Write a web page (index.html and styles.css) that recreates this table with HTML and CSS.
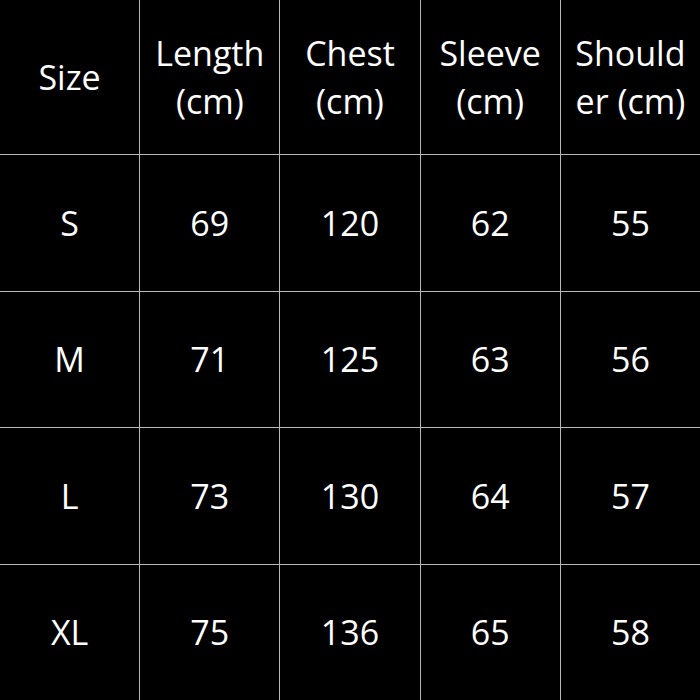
FILE: index.html
```html
<!DOCTYPE html>
<html lang="en">
<head>
<meta charset="utf-8">
<title>Size chart</title>
<link rel="stylesheet" href="styles.css">
</head>
<body>
<div class="chart">
  <div class="cell head">Size</div>
  <div class="cell head">Length (cm)</div>
  <div class="cell head">Chest (cm)</div>
  <div class="cell head">Sleeve (cm)</div>
  <div class="cell head">Shoulder (cm)</div>

  <div class="cell">S</div>
  <div class="cell">69</div>
  <div class="cell">120</div>
  <div class="cell">62</div>
  <div class="cell">55</div>

  <div class="cell">M</div>
  <div class="cell">71</div>
  <div class="cell">125</div>
  <div class="cell">63</div>
  <div class="cell">56</div>

  <div class="cell">L</div>
  <div class="cell">73</div>
  <div class="cell">130</div>
  <div class="cell">64</div>
  <div class="cell">57</div>

  <div class="cell">XL</div>
  <div class="cell">75</div>
  <div class="cell">136</div>
  <div class="cell">65</div>
  <div class="cell">58</div>
</div>
</body>
</html>
```

FILE: styles.css
```css
html, body {
  margin: 0;
  padding: 0;
  background: #000;
}

.chart {
  width: 700px;
  height: 700px;
  display: grid;
  grid-template-columns: repeat(5, 1fr);
  grid-template-rows: 154px repeat(4, 1fr);
  gap: 1px;
  background: #b8b8b8;
  font-family: "Open Sans", "Noto Sans", sans-serif;
  font-size: 34px;
  line-height: 48px;
  color: #fff;
}

.cell {
  background: #000;
  display: flex;
  align-items: center;
  justify-content: center;
  text-align: center;
  padding: 0 8px;
  overflow-wrap: anywhere;
  min-width: 0;
}
```
